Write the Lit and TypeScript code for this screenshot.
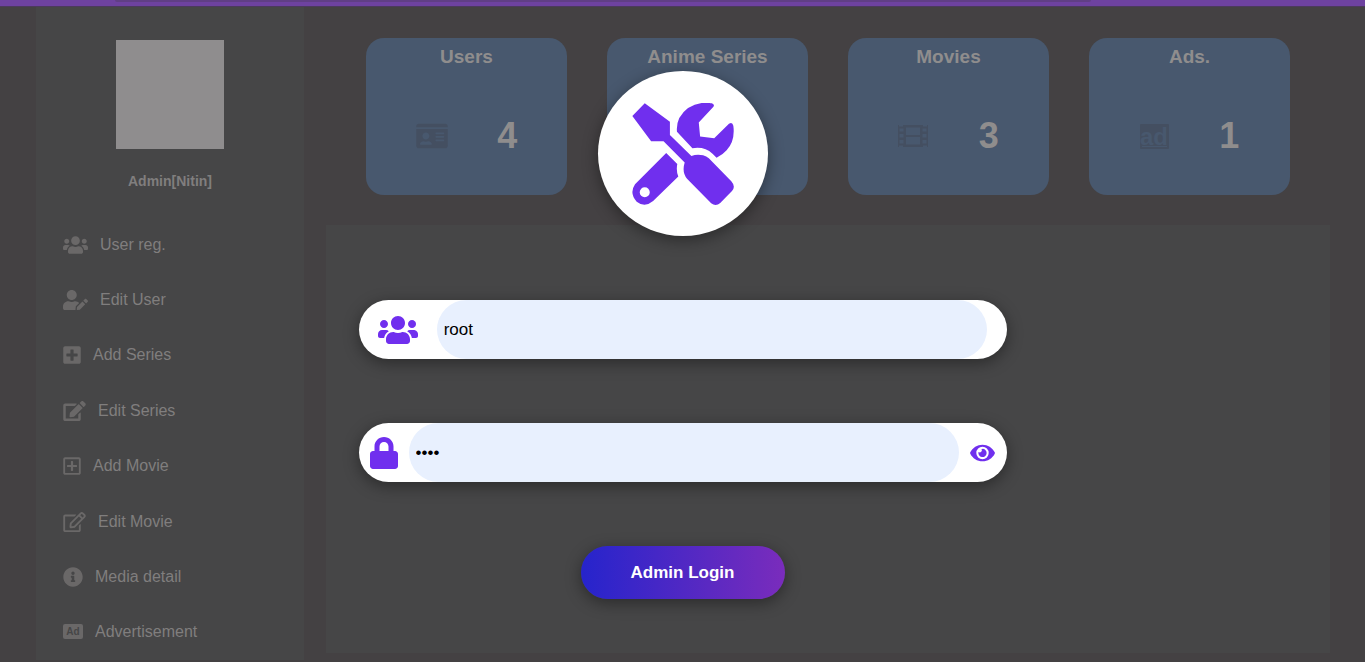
import { LitElement, html, css, svg } from "lit";
import { customElement, state } from "lit/decorators.js";

const icons: Record<string, { box: string; w: number; h: number; art: unknown }> = {
  users: { box: "0 0 640 512", w: 25, h: 20, art: svg`<path d="M96 224c35.3 0 64-28.7 64-64s-28.7-64-64-64-64 28.7-64 64 28.7 64 64 64zm448 0c35.3 0 64-28.7 64-64s-28.7-64-64-64-64 28.7-64 64 28.7 64 64 64zm32 32h-64c-17.6 0-33.5 7.1-45.1 18.6 40.3 22.1 68.9 62 75.1 109.4h66c17.7 0 32-14.3 32-32v-32c0-35.3-28.7-64-64-64zm-256 0c61.9 0 112-50.1 112-112S381.9 32 320 32 208 82.1 208 144s50.1 112 112 112zm76.8 32h-8.3c-20.8 10-43.9 16-68.5 16s-47.6-6-68.5-16h-8.3C179.6 288 128 339.6 128 403.2V432c0 26.5 21.5 48 48 48h288c26.5 0 48-21.5 48-48v-28.8c0-63.6-51.6-115.2-115.2-115.2zm-223.7-13.4C161.5 263.1 145.6 256 128 256H64c-35.3 0-64 28.7-64 64v32c0 17.7 14.3 32 32 32h65.9c6.3-47.4 34.9-87.3 75.2-109.4z"/>` },
  userEdit: { box: "0 0 640 512", w: 25, h: 20, art: svg`<path d="M224 256c70.7 0 128-57.3 128-128S294.7 0 224 0 96 57.3 96 128s57.3 128 128 128zm89.6 32h-16.7c-22.2 10.2-46.9 16-72.9 16s-50.6-5.8-72.9-16h-16.7C60.2 288 0 348.2 0 422.4V464c0 26.5 21.5 48 48 48h274.9c-2.4-6.8-3.4-14-2.6-21.3l6.8-60.9 1.2-11.1 7.9-7.9 77.3-77.3c-24.5-27.7-60-45.5-99.9-45.5zm45.3 145.3l-6.8 61c-1.1 10.2 7.5 18.8 17.6 17.6l60.9-6.8 137.9-137.9-71.7-71.7-137.9 137.8zM633 268.9L595.1 231c-9.3-9.3-24.5-9.3-33.8 0l-37.8 37.8-4.1 4.1 71.8 71.7 41.8-41.8c9.3-9.4 9.3-24.5 0-33.9z"/>` },
  plusSolid: { box: "0 0 448 512", w: 18, h: 20, art: svg`<path d="M400 32H48C21.5 32 0 53.5 0 80v352c0 26.5 21.5 48 48 48h352c26.5 0 48-21.5 48-48V80c0-26.5-21.5-48-48-48zm-32 252c0 6.6-5.4 12-12 12h-92v92c0 6.6-5.4 12-12 12h-56c-6.6 0-12-5.4-12-12v-92H92c-6.6 0-12-5.4-12-12v-56c0-6.6 5.4-12 12-12h92v-92c0-6.6 5.4-12 12-12h56c6.6 0 12 5.4 12 12v92h92c6.6 0 12 5.4 12 12v56z"/>` },
  editSolid: { box: "0 0 576 512", w: 23, h: 20, art: svg`<path d="M402.6 83.2l90.2 90.2c3.8 3.8 3.8 10 0 13.8L274.4 405.6l-92.8 10.3c-12.4 1.4-22.9-9.1-21.5-21.5l10.3-92.8L388.8 83.2c3.8-3.8 10-3.8 13.8 0zm162-22.9l-48.8-48.8c-15.2-15.2-39.9-15.2-55.2 0l-35.4 35.4c-3.8 3.8-3.8 10 0 13.8l90.2 90.2c3.8 3.8 10 3.8 13.8 0l35.4-35.4c15.2-15.3 15.2-40 0-55.2zM384 346.2V448H64V128h229.8c3.2 0 6.2-1.3 8.5-3.5l40-40c7.6-7.6 2.2-20.5-8.5-20.5H48C21.5 64 0 85.5 0 112v352c0 26.5 21.5 48 48 48h352c26.5 0 48-21.5 48-48V306.2c0-10.7-12.9-16-20.5-8.5l-40 40c-2.2 2.3-3.5 5.3-3.5 8.5z"/>` },
  plusLine: { box: "0 0 448 512", w: 18, h: 20, art: svg`<path d="M352 240v32c0 6.6-5.4 12-12 12h-88v88c0 6.6-5.4 12-12 12h-32c-6.6 0-12-5.4-12-12v-88h-88c-6.6 0-12-5.4-12-12v-32c0-6.6 5.4-12 12-12h88v-88c0-6.6 5.4-12 12-12h32c6.6 0 12 5.4 12 12v88h88c6.6 0 12 5.4 12 12zm96-160v352c0 26.5-21.5 48-48 48H48c-26.5 0-48-21.5-48-48V80c0-26.5 21.5-48 48-48h352c26.5 0 48 21.5 48 48zm-48 346V86c0-3.3-2.7-6-6-6H54c-3.3 0-6 2.7-6 6v340c0 3.3 2.7 6 6 6h340c3.3 0 6-2.7 6-6z"/>` },
  editLine: { box: "0 0 576 512", w: 23, h: 20, art: svg`<path d="M402.3 344.9l32-32c5-5 13.7-1.5 13.7 5.7V464c0 26.5-21.5 48-48 48H48c-26.5 0-48-21.5-48-48V112c0-26.5 21.5-48 48-48h273.5c7.1 0 10.7 8.6 5.7 13.7l-32 32c-1.5 1.5-3.5 2.3-5.7 2.3H48v352h352V350.5c0-2.1.8-4.1 2.3-5.6zm156.6-201.8L296.3 405.7l-90.4 10c-26.2 2.9-48.5-19.2-45.6-45.6l10-90.4L432.9 17.1c22.9-22.9 59.9-22.9 82.7 0l43.2 43.2c22.9 22.9 22.9 60 .1 82.8zM460.1 174L402 115.9 216.2 301.8l-7.3 65.3 65.3-7.3L460.1 174zm64.8-79.7l-43.2-43.2c-4.1-4.1-10.8-4.1-14.8 0L436 82l58.1 58.1 30.9-30.9c4-4.2 4-10.8-.1-14.9z"/>` },
  info: { box: "0 0 512 512", w: 20, h: 20, art: svg`<path d="M256 8C119.043 8 8 119.083 8 256c0 136.997 111.043 248 248 248s248-111.003 248-248C504 119.083 392.957 8 256 8zm0 110c23.196 0 42 18.804 42 42s-18.804 42-42 42-42-18.804-42-42 18.804-42 42-42zm56 254c0 6.627-5.373 12-12 12h-88c-6.627 0-12-5.373-12-12v-24c0-6.627 5.373-12 12-12h12v-64h-12c-6.627 0-12-5.373-12-12v-24c0-6.627 5.373-12 12-12h64c6.627 0 12 5.373 12 12v100h12c6.627 0 12 5.373 12 12v24z"/>` },
  adBadge: { box: "0 0 20 20", w: 20, h: 20, art: svg`<rect y="2" width="20" height="15" rx="2"/><text x="10" y="13" text-anchor="middle" font-size="10" font-weight="700" fill="#464647">Ad</text>` },
  idCard: { box: "0 0 576 512", w: 32, h: 28, art: svg`<path d="M528 32H48C21.5 32 0 53.5 0 80v16h576V80c0-26.5-21.5-48-48-48zM0 432c0 26.5 21.5 48 48 48h480c26.5 0 48-21.5 48-48V128H0v304zm352-232c0-4.4 3.6-8 8-8h144c4.4 0 8 3.6 8 8v16c0 4.4-3.6 8-8 8H360c-4.4 0-8-3.6-8-8v-16zm0 64c0-4.4 3.6-8 8-8h144c4.4 0 8 3.6 8 8v16c0 4.4-3.6 8-8 8H360c-4.4 0-8-3.6-8-8v-16zm0 64c0-4.4 3.6-8 8-8h144c4.4 0 8 3.6 8 8v16c0 4.4-3.6 8-8 8H360c-4.4 0-8-3.6-8-8v-16zm-176-136c35.3 0 64 28.7 64 64s-28.7 64-64 64-64-28.7-64-64 28.7-64 64-64zM67.1 396.2C75.5 370.5 99.6 352 128 352h8.2c12.3 5.1 25.7 8 39.8 8s27.6-2.9 39.8-8h8.2c28.4 0 52.5 18.5 60.9 44.2 3.2 9.9-5.2 19.8-15.6 19.8H82.7c-10.4 0-18.8-10-15.6-19.8z"/>` },
  film: { box: "0 0 30 28", w: 30, h: 28, art: svg`<path fill-rule="evenodd" d="M0 3h1v1.500h4V3h20v1.500h4V3h1v22h-1v-1.500h-4V25H5v-1.500H1V25H0zM8 5.500v7.500h14V5.500zM8 15v7.500h14V15zM1.500 6.500v3h4v-3zM1.500 12v3.500h4V12zM1.500 18v3.500h4V18zM24.500 6.500v3h4v-3zM24.500 12v3.500h4V12zM24.500 18v3.500h4V18z"/>` },
  adTile: { box: "0 0 29 28", w: 29, h: 28, art: svg`<rect y="2" width="29" height="25" rx="1"/><text x="14" y="23" text-anchor="middle" font-size="24" font-weight="700" fill="#48586e">ad</text><rect x="2" y="24" width="25" height="1" fill="#48586e"/>` },
  lock: { box: "0 0 448 512", w: 28, h: 32, art: svg`<path d="M400 224h-24v-72C376 68.2 307.8 0 224 0S72 68.2 72 152v72H48c-26.5 0-48 21.500-48 48v192c0 26.500 21.500 48 48 48h352c26.500 0 48-21.500 48-48V272c0-26.500-21.500-48-48-48zm-104 0H152v-72c0-39.700 32.300-72 72-72s72 32.300 72 72v72z"/>` },
  eye: { box: "0 0 576 512", w: 25, h: 22, art: svg`<path d="M572.52 241.4C518.29 135.59 410.93 64 288 64S57.68 135.64 3.48 241.41a32.35 32.35 0 0 0 0 29.19C57.71 376.41 165.07 448 288 448s230.32-71.64 284.52-177.41a32.35 32.35 0 0 0 0-29.19zM288 400a144 144 0 1 1 144-144 143.93 143.93 0 0 1-144 144zm0-240a95.31 95.31 0 0 0-25.31 3.79 47.85 47.85 0 0 1-66.9 66.9A95.78 95.78 0 1 0 288 160z"/>` },
  tools: { box: "158 247 304 304", w: 102, h: 102, art: svg`<path fill-rule="evenodd" d="M196 248L271 303V342L335 405Q352 398 370 403Q380 406 387 412L454 480Q468 496 456 509L421 545Q408 556 394 546L322 473Q306 453 315 424L252 361H215L159 286ZM292 333Q288 290 325 262Q358 241 396 248Q406 252 400 259L357 305L361 347L403 352L447 309Q457 302 460 315Q466 360 440 388Q428 402 410 410L398 398Q374 376 338 382ZM260 396L293 429Q289 448 296 466L221 539Q196 560 172 541Q149 516 167 489ZM196 498a15 15 0 1 0 0 30a15 15 0 1 0 0-30Z"/>` },
};

const icon = (name: string, w = icons[name].w, h = icons[name].h) => html`
  <svg viewBox=${icons[name].box} width=${w} height=${h} fill="currentColor" aria-hidden="true">${icons[name].art}</svg>`;

const menu = [
  ["users", "User reg."],
  ["userEdit", "Edit User"],
  ["plusSolid", "Add Series"],
  ["editSolid", "Edit Series"],
  ["plusLine", "Add Movie"],
  ["editLine", "Edit Movie"],
  ["info", "Media detail"],
  ["adBadge", "Advertisement"],
];

const stats = [
  { title: "Users", icon: "idCard", count: 4 },
  { title: "Anime Series", icon: "film", count: 3 },
  { title: "Movies", icon: "film", count: 3 },
  { title: "Ads.", icon: "adTile", count: 1 },
];

@customElement("admin-dashboard")
export class AdminDashboard extends LitElement {
  static styles = css`
    :host { display: flex; flex-direction: column; min-height: 100vh; background: #444143; }
    * { box-sizing: border-box; }
    svg { display: block; flex: none; font-family: "Liberation Sans", sans-serif; }
    .topbar { height: 7px; background: #6e42a0; border-bottom: 1px solid #4c3a5c; }
    .searchbar { height: 2px; width: 71.5%; margin-left: 115px; background: #603f85; border-radius: 0 0 6px 6px; }
    .page { flex: 1; display: grid; grid-template-columns: 268px 1fr; gap: 22px; padding: 0 35px 0 36px; margin-bottom: 2px; }
    .side { background: #464647; display: flex; flex-direction: column; padding-top: 33px; }
    .avatar { width: 108px; height: 109px; background: #8f8d8e; align-self: center; }
    .name { margin: 22px 0 26px; font-size: 14px; line-height: 20px; font-weight: 700; color: #807e7e; text-align: center; }
    .menu { flex: 1; display: grid; grid-auto-rows: 1fr; list-style: none; margin: 0; padding: 0 27px; }
    .link { height: 100%; display: flex; align-items: center; gap: 12px; font-size: 16px; color: #807e7e; text-decoration: none; }
    .link svg { color: #6a6868; }
    .main { display: flex; flex-direction: column; gap: 30px; padding: 31px 0 7px; }
    .cards { display: grid; grid-template-columns: repeat(4, 1fr); gap: 40px; padding: 0 40px; }
    .card { background: #48586e; border-radius: 18px; height: 157px; display: flex; flex-direction: column; padding-top: 8px; }
    .title { margin: 0; font-size: 19px; line-height: 22px; text-align: center; color: #8f8d8d; }
    .figure { flex: 1; display: flex; align-items: center; justify-content: space-evenly; padding-top: 8px; color: #444f61; }
    .count { font-size: 36px; line-height: 40px; font-weight: 700; color: #8f8d8d; }
    .panel { flex: 1; background: #464647; }
  `;
  render() {
    return html`
      <header class="topbar"><div class="searchbar"></div></header>
      <div class="page">
        <nav class="side">
          <div class="avatar"></div>
          <p class="name">Admin[Nitin]</p>
          <ul class="menu">
            ${menu.map(([glyph, label]) => html`<li><a class="link" href="#">${icon(glyph)}${label}</a></li>`)}
          </ul>
        </nav>
        <main class="main">
          <section class="cards">
            ${stats.map((s) => html`
              <article class="card">
                <h3 class="title">${s.title}</h3>
                <div class="figure">${icon(s.icon)}<span class="count">${s.count}</span></div>
              </article>`)}
          </section>
          <section class="panel"></section>
        </main>
      </div>`;
  }
}

@customElement("admin-login")
export class AdminLogin extends LitElement {
  @state() private visible = false;

  static styles = css`
    :host { display: block; }
    * { box-sizing: border-box; }
    svg { display: block; flex: none; }
    .form { display: flex; flex-direction: column; align-items: center; gap: 64px; padding-top: 71px; color: #702fee; }
    .badge { width: 170px; height: 165px; border-radius: 50%; background: #fff; display: grid; place-items: center; box-shadow: 0 4px 16px rgba(0, 0, 0, 0.4); }
    .field { width: 648px; max-width: 90%; height: 59px; border-radius: 30px; background: #fff; display: flex; align-items: center; justify-content: space-evenly; box-shadow: 0 4px 16px rgba(0, 0, 0, 0.4); }
    .input { width: 85%; height: 100%; border: 0; border-radius: 30px; outline: none; padding: 0 7px; background: #e8f0fe; color: #000; font: 17px "Liberation Sans", Arial, sans-serif; }
    .toggle { border: 0; padding: 0; background: none; color: inherit; cursor: pointer; }
    .submit { width: 204px; height: 53px; border: 0; border-radius: 27px; background: linear-gradient(90deg, #2624cc, #7a2cbc); color: #fff; font: 700 17px "Liberation Sans", Arial, sans-serif; box-shadow: 0 4px 16px rgba(0, 0, 0, 0.4); cursor: pointer; }
  `;
  render() {
    return html`
      <form class="form" @submit=${(e: Event) => e.preventDefault()}>
        <div class="badge">${icon("tools")}</div>
        <div class="field">
          <label for="user" aria-label="Username">${icon("users", 40, 32)}</label>
          <input class="input" id="user" type="text" .value=${"root"} autocomplete="username" />
        </div>
        <div class="field">
          <label for="pass" aria-label="Password">${icon("lock")}</label>
          <input class="input" id="pass" type=${this.visible ? "text" : "password"} .value=${"root"} autocomplete="current-password" />
          <button class="toggle" type="button" aria-label="Show password" @click=${() => (this.visible = !this.visible)}>${icon("eye")}</button>
        </div>
        <button class="submit" type="submit">Admin Login</button>
      </form>`;
  }
}

@customElement("app-root")
export class AppRoot extends LitElement {
  static styles = css`
    :host { display: block; position: relative; font-family: "Liberation Sans", Arial, sans-serif; }
    .overlay { position: absolute; inset: 0; }
  `;
  render() {
    return html`<admin-dashboard></admin-dashboard><admin-login class="overlay"></admin-login>`;
  }
}
